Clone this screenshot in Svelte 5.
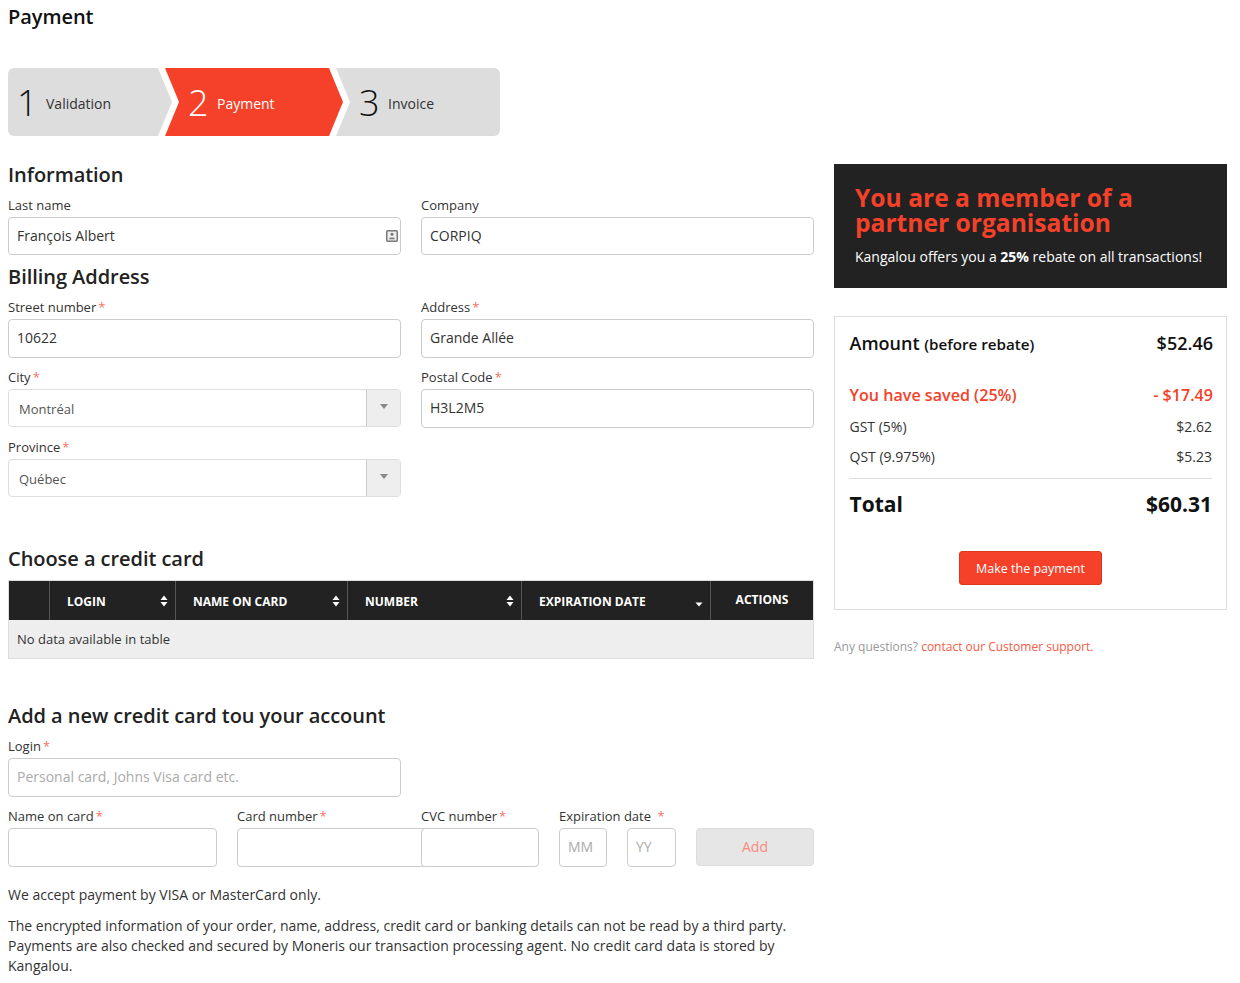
<script>
  const columns = [
    { label: 'LOGIN', sort: 'both', w: 126 },
    { label: 'NAME ON CARD', sort: 'both', w: 172 },
    { label: 'NUMBER', sort: 'both', w: 174 },
    { label: 'EXPIRATION DATE', sort: 'desc', w: 189 }
  ];
</script>

<div class="page">
  <h1>Payment</h1>

  <div class="steps">
    <div class="step first"><span class="num">1</span><span class="lbl">Validation</span></div>
    <div class="step active"><span class="num">2</span><span class="lbl">Payment</span></div>
    <div class="step last"><span class="num">3</span><span class="lbl">Invoice</span></div>
  </div>

  <div class="layout">
    <main>
      <h2 class="info">Information</h2>
      <div class="row">
        <div class="field">
          <label for="ln">Last name</label>
          <div class="iconwrap">
            <input id="ln" class="short" value="François Albert" />
            <svg class="card-icon" width="12" height="12" viewBox="0 0 12 12" aria-hidden="true">
              <rect x="0.75" y="0.75" width="10.5" height="10.5" rx="1" fill="#eee" stroke="#777" stroke-width="1.5" />
              <circle cx="6" cy="4.2" r="1.5" fill="#777" />
              <path d="M3 9.3 C3 6.9 9 6.9 9 9.3 Z" fill="#777" />
            </svg>
          </div>
        </div>
        <div class="field">
          <label for="co">Company</label>
          <input id="co" class="short" value="CORPIQ" />
        </div>
      </div>

      <h2 class="billing">Billing Address</h2>
      <div class="row">
        <div class="field">
          <label for="sn">Street number<span class="req">*</span></label>
          <input id="sn" value="10622" />
        </div>
        <div class="field">
          <label for="ad">Address<span class="req">*</span></label>
          <input id="ad" value="Grande Allée" />
        </div>
      </div>
      <div class="row gap12">
        <div class="field">
          <span class="lab">City<span class="req">*</span></span>
          <div class="select"><span class="val">Montréal</span><span class="arrow"><i></i></span></div>
        </div>
        <div class="field">
          <label for="pc">Postal Code<span class="req">*</span></label>
          <input id="pc" value="H3L2M5" />
        </div>
      </div>
      <div class="row gap12">
        <div class="field">
          <span class="lab">Province<span class="req">*</span></span>
          <div class="select"><span class="val">Québec</span><span class="arrow"><i></i></span></div>
        </div>
        <div class="field"></div>
      </div>

      <h2 class="choose">Choose a credit card</h2>
      <table>
        <thead>
          <tr>
            <th class="c0"></th>
            {#each columns as c}
              <th style="width:{c.w}px">
                <span class="thin">
                  {c.label}
                  {#if c.sort === 'both'}
                    <svg width="8" height="12" viewBox="0 0 8 12" aria-hidden="true"><path d="M4 0.5 L7.5 5 H0.5 Z M4 11.5 L7.5 7 H0.5 Z" fill="#fff" /></svg>
                  {:else}
                    <svg class="desc" width="8" height="12" viewBox="0 0 8 12" aria-hidden="true"><path d="M4 9.5 L7.5 5.5 H0.5 Z" fill="#fff" /></svg>
                  {/if}
                </span>
              </th>
            {/each}
            <th class="actions">ACTIONS</th>
          </tr>
        </thead>
        <tbody>
          <tr><td colspan="6">No data available in table</td></tr>
        </tbody>
      </table>

      <h2 class="addnew">Add a new credit card tou your account</h2>
      <div class="row">
        <div class="field">
          <label for="lg">Login<span class="req">*</span></label>
          <input id="lg" placeholder="Personal card, Johns Visa card etc." />
        </div>
        <div class="field"></div>
      </div>
      <div class="cardrow">
        <div class="f name">
          <label for="nm">Name on card<span class="req">*</span></label>
          <input id="nm" />
        </div>
        <div class="f number">
          <label for="cn">Card number<span class="req">*</span></label>
          <input id="cn" />
        </div>
        <div class="f cvc">
          <label for="cv">CVC number<span class="req">*</span></label>
          <input id="cv" />
        </div>
        <div class="f exp">
          <label for="mm">Expiration date <span class="req sp">*</span></label>
          <div class="expins">
            <input id="mm" placeholder="MM" />
            <input placeholder="YY" aria-label="Year" />
          </div>
        </div>
        <button class="add" disabled>Add</button>
      </div>

      <p class="accept">We accept payment by VISA or MasterCard only.</p>
      <p class="legal">The encrypted information of your order, name, address, credit card or banking details can not be read by a third party. Payments are also checked and secured by Moneris our transaction processing agent. No credit card data is stored by Kangalou.</p>
    </main>

    <aside>
      <div class="promo">
        <h3>You are a member of a partner organisation</h3>
        <p>Kangalou offers you a <b>25%</b> rebate on all transactions!</p>
      </div>
      <div class="summary">
        <div class="line amount"><span>Amount <small>(before rebate)</small></span><span>$52.46</span></div>
        <div class="line saved"><span>You have saved (25%)</span><span>- $17.49</span></div>
        <div class="line tax gst"><span>GST (5%)</span><span>$2.62</span></div>
        <div class="line tax qst"><span>QST (9.975%)</span><span>$5.23</span></div>
        <div class="line total"><span>Total</span><span>$60.31</span></div>
        <div class="btnrow"><button class="pay">Make the payment</button></div>
      </div>
      <p class="help">Any questions? <a href="#support">contact our Customer support.</a></p>
    </aside>
  </div>
</div>

<style>
  :global(body) {
    margin: 0;
    background: #fff;
    font-family: "Open Sans", "Noto Sans", sans-serif;
    font-size: 14px;
    color: #222;
  }
  * { box-sizing: border-box; }
  .page { width: 1240px; height: 983px; padding: 0 13px 0 8px; overflow: hidden; }
  h1, h2, h3, p { margin: 0; }
  h1 { font-size: 20px; line-height: 24px; font-weight: 600; color: #111; padding-top: 5px; letter-spacing: -0.05px; }
  h2 { font-size: 20px; line-height: 24px; font-weight: 600; color: #222; letter-spacing: -0.05px; }

  .steps { display: flex; width: 492px; height: 68px; margin-top: 39px; border-radius: 6px; overflow: hidden; }
  .step { display: flex; align-items: center; background: #ddd; color: #333; height: 68px; flex: none; padding-top: 2px; }
  .step + .step { margin-left: -7px; }
  .first { width: 164px; padding-left: 8px; clip-path: polygon(0 0, 150px 0, 100% 50%, 150px 100%, 0 100%); }
  .active { width: 178px; padding-left: 23px; background: #f5412a; color: #fff; clip-path: polygon(0 0, 164px 0, 100% 50%, 164px 100%, 0 100%, 14px 50%); }
  .last { width: 164px; padding-left: 23px; clip-path: polygon(0 0, 100% 0, 100% 100%, 0 100%, 14px 50%); }
  .num { font-size: 36px; font-weight: 300; line-height: 1; width: 29px; color: #111; }
  .first .num { width: 30px; padding-left: 1px; }
  .active .num { color: #fff; }
  .lbl { font-size: 14px; }

  .layout { display: grid; grid-template-columns: 806px 393px; column-gap: 20px; }
  main { min-width: 0; }
  .info { margin-top: 27px; }
  .billing { margin-top: 10px; }
  .choose { margin-top: 50px; }
  .addnew { margin-top: 45px; }

  .row { display: grid; grid-template-columns: 393px 393px; column-gap: 20px; margin-top: 9px; }
  .row.gap12 { margin-top: 10px; }
  label, .lab { display: block; font-size: 13px; line-height: 18px; color: #333; margin-bottom: 3px; }
  .req { color: #f5412a; margin-left: 2px; opacity: 0.75; }
  .req.sp { margin-left: 3px; }

  input {
    display: block; width: 100%; height: 39px; padding: 0 8px 2px;
    border: 1px solid #ccc; border-radius: 4px; background: #fff;
    font: 14px "Open Sans", sans-serif; color: #333; outline: none;
  }
  input.short { height: 38px; }
  input::placeholder { color: #aaa; opacity: 1; }
  .iconwrap { position: relative; }
  .card-icon { position: absolute; right: 3px; top: 13px; }

  .select { display: flex; height: 38px; border: 1px solid #ddd; border-radius: 4px; overflow: hidden; }
  .val { flex: 1; padding: 1px 10px 0; font-size: 13px; line-height: 36px; color: #555; }
  .arrow { width: 34px; background: #eee; border-left: 1px solid #ccc; display: flex; align-items: center; justify-content: center; }
  .arrow i { display: block; width: 0; height: 0; margin-top: -3px; border-left: 4px solid transparent; border-right: 4px solid transparent; border-top: 5px solid #888; }

  table { width: 806px; margin-top: 9px; border-collapse: separate; border-spacing: 0; table-layout: fixed; border: 1px solid #ddd; }
  th { height: 39px; padding: 1px 7px 0 17px; background: #222; color: #fff; font-size: 12px; font-weight: 700; text-align: left; border-left: 1px solid #555; }
  th:first-child { border-left: 0; }
  th.c0 { width: 40px; }
  th.actions { text-align: center; padding: 0 0 2px; }
  .thin { display: flex; align-items: center; justify-content: space-between; }
  .desc { margin-top: 3px; }
  td { height: 38px; padding: 0 8px; background: #eee; font-size: 13px; color: #333; }

  .cardrow { display: flex; margin-top: 10px; align-items: flex-end; }
  .f { flex: none; }
  .name { width: 209px; margin-right: 20px; }
  .number { width: 193px; margin-right: -9px; }
  .cvc { width: 118px; margin-right: 20px; position: relative; }
  .exp { width: 117px; margin-right: 20px; white-space: nowrap; }
  .expins { display: flex; gap: 20px; }
  .expins input { width: 48px; }
  .expins input + input { width: 49px; }
  .add { flex: none; width: 118px; height: 38px; margin-bottom: 1px; padding: 0 0 2px; border: 1px solid #ddd; border-radius: 4px; background: #e6e6e6; color: #f98b7c; font: 14px "Open Sans", sans-serif; }

  .accept { margin-top: 18px; line-height: 20px; color: #333; }
  .legal { margin-top: 11px; line-height: 20px; color: #333; }

  .promo { height: 124px; margin-top: 28px; padding: 21px 21px 0; background: #222; color: #fff; }
  .promo h3 { font-size: 24.6px; line-height: 25px; font-weight: 700; color: #f5412a; }
  .promo p { margin-top: 12px; font-size: 14px; line-height: 20px; }
  .summary { height: 294px; margin-top: 28px; padding: 0 14px; border: 1px solid #ddd; }
  .line { display: flex; justify-content: space-between; align-items: baseline; padding-left: 0.5px; }
  .amount { margin-top: 13px; margin-right: -1px; font-size: 18px; line-height: 26px; font-weight: 600; color: #111; }
  .amount small { font-size: 15.2px; font-weight: 600; }
  .saved { margin-top: 27px; margin-right: -1px; font-size: 16.1px; line-height: 22px; font-weight: 600; color: #f5412a; }
  .tax { font-size: 14px; line-height: 20px; color: #333; }
  .gst { margin-top: 11px; }
  .qst { margin-top: 10px; padding-bottom: 11px; border-bottom: 1px solid #ddd; }
  .total { margin-top: 9px; font-size: 21px; line-height: 32px; font-weight: 700; color: #111; }
  .btnrow { display: flex; justify-content: center; margin-top: 31px; }
  .pay { width: 143px; height: 34px; border: 1px solid #d9371f; border-radius: 3px; background: #f5412a; color: #fff; font: 12.5px "Open Sans", sans-serif; }
  .help { margin-top: 28px; font-size: 12px; line-height: 18px; color: #999; }
  .help a { color: #f65a45; text-decoration: none; }
</style>
